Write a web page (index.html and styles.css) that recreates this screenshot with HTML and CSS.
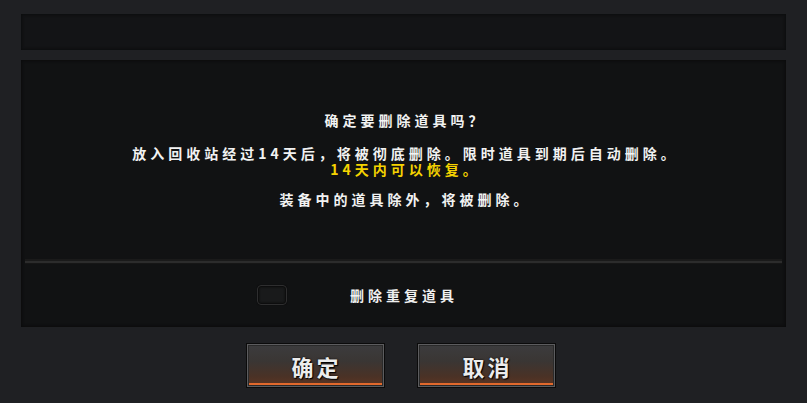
FILE: index.html
```html
<!DOCTYPE html>
<html lang="zh-CN">
<head>
<meta charset="utf-8">
<title>删除道具</title>
<link rel="stylesheet" href="styles.css">
</head>
<body>
<div class="dialog">
  <div class="top-bar"></div>
  <div class="main-panel">
    <div class="message">
      <p class="title">确定要删除道具吗？</p>
      <p class="line line-first">放入回收站经过14天后，将被彻底删除。限时道具到期后自动删除。</p>
      <p class="line highlight">14天内可以恢复。</p>
      <p class="line line-last">装备中的道具除外，将被删除。</p>
    </div>
    <div class="separator"></div>
    <div class="option-row">
      <span class="checkbox"></span>
      <span class="option-label">删除重复道具</span>
    </div>
  </div>
  <div class="actions">
    <button class="btn">确定</button>
    <button class="btn">取消</button>
  </div>
</div>
</body>
</html>
```

FILE: styles.css
```css
html, body {
  margin: 0;
  padding: 0;
}
body {
  width: 807px;
  height: 403px;
  background: #1f2023;
  font-family: "Noto Sans CJK SC", "Noto Sans", sans-serif;
  overflow: hidden;
}
.dialog {
  padding: 14px 21px 0 21px;
  display: flex;
  flex-direction: column;
}
.top-bar {
  height: 36px;
  background: #131416;
  box-shadow: inset 0 0 3px 1px #0c0d0e;
}
.main-panel {
  margin-top: 10px;
  height: 267px;
  background: #111213;
  box-shadow: inset 0 0 3px 1px #0b0b0c;
  display: flex;
  flex-direction: column;
}
.message {
  height: 199px;
  padding-top: 51px;
  box-sizing: border-box;
  text-align: center;
  color: #f2f2f2;
  font-size: 14px;
  font-weight: bold;
  letter-spacing: 4px;
}
.message .title,
.message .line {
  margin: 0;
  padding-left: 4px;
}
.message .title {
  line-height: 18px;
}
.message .line {
  line-height: 16px;
}
.message .line-first {
  margin-top: 16px;
}
.message .highlight {
  color: #f5d300;
}
.message .line-last {
  margin-top: 13px;
  line-height: 18px;
}
.separator {
  margin: 0 4px;
  height: 5px;
  background: linear-gradient(#1a1a1a 0, #1a1a1a 2px, #2c2c2c 2px, #2c2c2c 4px, #161616 4px);
}
.option-row {
  flex: 1;
  display: flex;
  align-items: center;
  padding-left: 236px;
  padding-bottom: 2px;
}
.checkbox {
  width: 28px;
  height: 18px;
  border: 1px solid #2e2e2f;
  border-radius: 4px;
  background: #191a1b;
  box-shadow: inset 0 0 2px 1px #0a0a0a, 0 0 1px #000;
}
.option-label {
  margin-left: 63px;
  color: #f0f0f0;
  font-size: 14px;
  font-weight: bold;
  letter-spacing: 4px;
}
.actions {
  margin-top: 16px;
  display: flex;
  justify-content: center;
  gap: 32px;
  padding-right: 6px;
}
.btn {
  width: 139px;
  height: 45px;
  padding: 0;
  border: 1px solid #0b0b0b;
  background:
    linear-gradient(to top, transparent 2px, #e2692c 2px, #e2692c 4px, transparent 4px),
    linear-gradient(#3c3c3e 0%, #3a3634 40%, #4a3226 75%, #5e3522 100%);
  box-shadow: inset 0 0 0 1px #5c5c5e, inset 0 0 0 2px #2a2a2a;
  color: #ececec;
  font-family: "Noto Sans CJK SC", "Noto Sans", sans-serif;
  font-size: 22px;
  font-weight: bold;
  letter-spacing: 3px;
  text-indent: 3px;
  text-shadow: 0 0 2px #000, 1px 1px 1px #000;
  cursor: pointer;
}
```
